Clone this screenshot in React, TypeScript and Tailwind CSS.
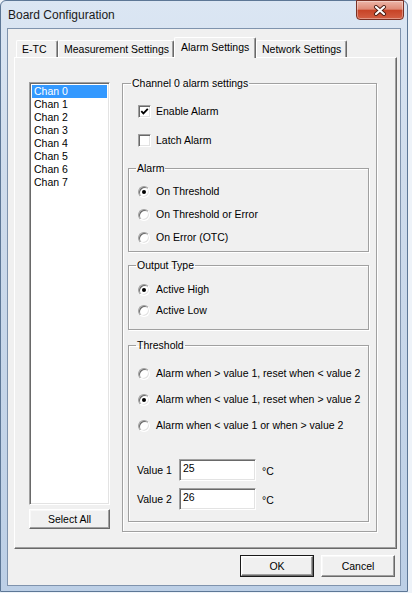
import React from 'react';

const font = { fontFamily: '"Liberation Sans", Arial, sans-serif' };

const sunken =
  'border border-t-[#a0a0a0] border-l-[#a0a0a0] border-r-white border-b-white shadow-[inset_1px_1px_0_#696969,inset_-1px_-1px_0_#e3e3e3]';
const raised =
  'border border-t-white border-l-white border-r-[#696969] border-b-[#696969] shadow-[inset_-1px_-1px_0_#a0a0a0,inset_1px_1px_0_#f8f8f8]';
const etched = 'border border-[#a0a0a0] shadow-[inset_1px_1px_0_#fff,1px_1px_0_#fff]';

const channels = ['Chan 0', 'Chan 1', 'Chan 2', 'Chan 3', 'Chan 4', 'Chan 5', 'Chan 6', 'Chan 7'];

function CheckBox({ checked, label }: { checked?: boolean; label: string }) {
  return (
    <div className="flex h-[13px] items-center gap-[5px] pl-[10px]">
      <div className={`h-[13px] w-[13px] bg-white ${sunken} flex items-center justify-center`}>
        {checked && (
          <svg width="9" height="9" viewBox="0 0 9 9">
            <path d="M1.3 4.2 L3.4 6.4 L7.8 1.8" fill="none" stroke="#000" strokeWidth="1.8" />
          </svg>
        )}
      </div>
      <span>{label}</span>
    </div>
  );
}

function Radio({ checked, label }: { checked?: boolean; label: string }) {
  return (
    <div className="flex h-[13px] items-center gap-[6px] pl-[9px]">
      <div
        className={`h-[12px] w-[12px] rounded-full bg-white ${sunken} flex items-center justify-center`}
      >
        {checked && <div className="h-[4px] w-[4px] rounded-full bg-black" />}
      </div>
      <span>{label}</span>
    </div>
  );
}

function Group({
  title,
  className,
  legendMl,
  children,
}: {
  title: string;
  className: string;
  legendMl: string;
  children: React.ReactNode;
}) {
  return (
    <fieldset className={`${etched} ${className}`}>
      <legend className={`${legendMl} px-[1px] leading-[13px]`}>{title}</legend>
      {children}
    </fieldset>
  );
}

function ValueRow({ label, value, className }: { label: string; value: string; className: string }) {
  return (
    <div className={`flex items-center pl-[8px] ${className}`}>
      <span className="w-[42px]">{label}</span>
      <input
        readOnly
        defaultValue={value}
        style={font}
        className={`h-[22px] w-[77px] bg-white ${sunken} px-[3px] pb-[4px] text-[10.5px] leading-[13px] text-black outline-none`}
      />
      <span className="ml-[6px] mt-[3px]">°C</span>
    </div>
  );
}

function Tab({ label, width, selected }: { label: string; width: string; selected?: boolean }) {
  if (selected) {
    return (
      <div
        className={`${width} relative z-10 -mb-px flex h-[21px] items-start rounded-t-[2px] border-l border-t border-r border-l-white border-t-white border-r-[#696969] bg-[#f0f0f0] pl-[6px] pt-[3px] shadow-[inset_-1px_0_0_#a0a0a0]`}
      >
        {label}
      </div>
    );
  }
  return (
    <div
      className={`${width} flex h-[17px] items-center rounded-t-[2px] border-l border-t border-r border-l-white border-t-white border-r-[#696969] pl-[5px] shadow-[inset_-1px_0_0_#a0a0a0]`}
    >
      {label}
    </div>
  );
}

export default function App() {
  return (
    <div className="h-[593px] w-[412px] overflow-hidden bg-[#eef3f9]" style={font}>
      <div className="flex h-[592px] w-[408px] flex-col rounded-t-[6px] border border-[#5d7796] bg-[linear-gradient(180deg,#dbe6f3_0%,#cfdcec_30%,#bccfe6_100%)]">
        {/* title bar */}
        <div className="flex h-[27px] items-center justify-between pl-[7px] pr-[3px]">
          <span className="text-[12px] text-[#1a1a1a]">Board Configuration</span>
          <div className="-mt-px flex h-[20px] w-[48px] items-center justify-center self-start rounded-b-[4px] border border-[#7a3124] bg-[linear-gradient(180deg,#edb6a8_0%,#df8a76_45%,#c74427_52%,#d35f44_100%)] shadow-[inset_0_0_0_1px_rgba(255,255,255,0.35)]">
            <svg width="14" height="11" viewBox="0 0 14 11">
              <path d="M3 2 L11 9 M11 2 L3 9" stroke="#4a1b12" strokeWidth="4" strokeLinecap="round" />
              <path d="M3 2 L11 9 M11 2 L3 9" stroke="#fff" strokeWidth="2.2" strokeLinecap="round" />
            </svg>
          </div>
        </div>

        {/* client area */}
        <div className="mx-[6px] flex h-[558px] flex-col border border-[#7f93ad] bg-[#f0f0f0] text-[10.5px] leading-[13px] text-black">
          <div className="mt-[8px] flex h-[20px] items-end pl-[8px]">
            <Tab label="E-TC" width="w-[42px]" />
            <Tab label="Measurement Settings" width="w-[116px]" />
            <Tab label="Alarm Settings" width="w-[82px]" selected />
            <Tab label="Network Settings" width="w-[91px]" />
          </div>

          <div className="ml-[6px] flex h-[492px] w-[383px] border border-t-white border-l-white border-r-[#696969] border-b-[#696969] pl-[14px] pt-[19px] shadow-[inset_-1px_-1px_0_#a0a0a0]">
            <div className="flex w-[81px] flex-col">
              <div className={`mt-[5px] h-[423px] bg-white ${sunken} p-[2px]`}>
                {channels.map((c, i) => (
                  <div
                    key={c}
                    className={`h-[13px] pl-[2px] ${i === 0 ? 'bg-[#3399ff] text-white' : ''}`}
                  >
                    {c}
                  </div>
                ))}
              </div>
              <div className={`mt-[4px] flex h-[20px] items-center justify-center ${raised}`}>
                Select All
              </div>
            </div>

            <Group title="Channel 0 alarm settings" className="ml-[12px] h-[455px] w-[255px]" legendMl="ml-[8px]">
              <div className="flex flex-col pl-[5px]">
                <div className="mt-[15px]">
                  <CheckBox checked label="Enable Alarm" />
                </div>
                <div className="mt-[16px]">
                  <CheckBox label="Latch Alarm" />
                </div>

                <Group title="Alarm" className="mt-[15px] h-[90px] w-[241px]" legendMl="ml-[7px]">
                  <div className="mt-[10px] flex flex-col gap-[10px]">
                    <Radio checked label="On Threshold" />
                    <Radio label="On Threshold or Error" />
                    <Radio label="On Error (OTC)" />
                  </div>
                </Group>

                <Group title="Output Type" className="mt-[7px] h-[71px] w-[241px]" legendMl="ml-[7px]">
                  <div className="mt-[11px] flex flex-col gap-[8px]">
                    <Radio checked label="Active High" />
                    <Radio label="Active Low" />
                  </div>
                </Group>

                <Group title="Threshold" className="mt-[9px] h-[183px] w-[241px]" legendMl="ml-[7px]">
                  <div className="mt-[15px] flex flex-col gap-[13px]">
                    <Radio label="Alarm when > value 1, reset when < value 2" />
                    <Radio checked label="Alarm when < value 1, reset when > value 2" />
                    <Radio label="Alarm when < value 1 or when > value 2" />
                  </div>
                  <ValueRow label="Value 1" value="25" className="mt-[27px]" />
                  <ValueRow label="Value 2" value="26" className="mt-[7px]" />
                </Group>
              </div>
            </Group>
          </div>

          <div className="mt-[6px] flex justify-end gap-[7px] pr-[5px]">
            <div className="h-[22px] w-[74px] border border-[#1a1a1a]">
              <div className={`flex h-full w-full items-center justify-center ${raised}`}>OK</div>
            </div>
            <div className={`flex h-[22px] w-[74px] items-center justify-center ${raised}`}>Cancel</div>
          </div>
        </div>
      </div>
    </div>
  );
}
